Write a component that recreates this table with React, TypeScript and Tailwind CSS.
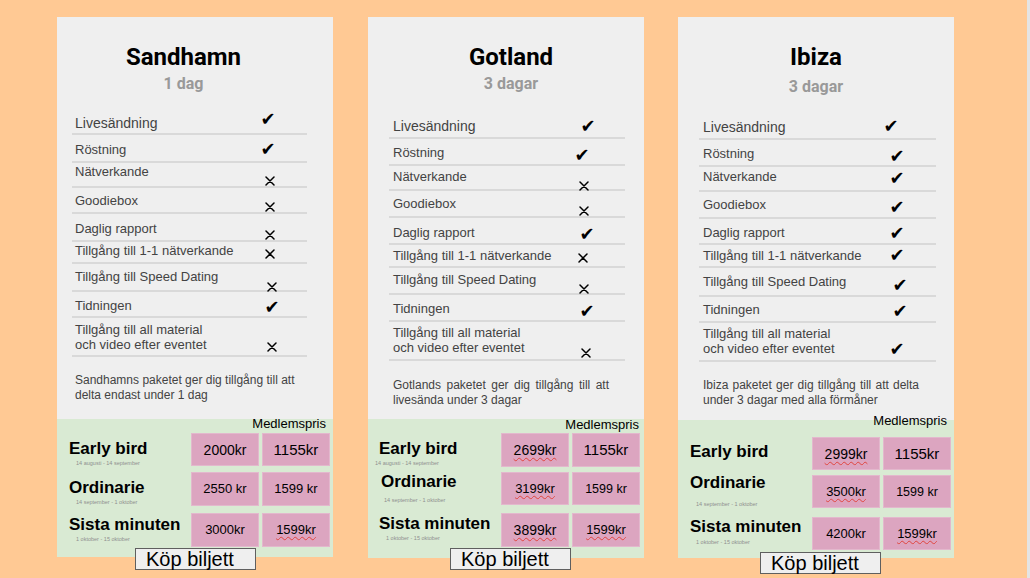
import React from "react";

type Feature = {
  t: string;
  ok: boolean;
  h: string;
  tp: string;
  ip: string;
  big?: boolean;
  two?: boolean;
};

type Cell = { v: string; s: string; wavy?: boolean };

type PriceRow = {
  label: string;
  date?: string;
  h: string;
  m: string;
  lp: string;
  dp: string;
  cells: Cell[];
};

type Plan = {
  title: string;
  sub: string;
  wrap: string;
  head: string;
  subM: string;
  gray: string;
  green: string;
  list: string;
  textW: string;
  rows: Feature[];
  desc: string;
  descCls: string;
  member: string;
  labelW: string;
  prices: PriceRow[];
  btn: string;
};

const allMaterial = "Tillgång till all material\noch video efter eventet";

// icon offsets: pt = icon centre - row top - 5 (icons sit in a 10px box)
const plans: Plan[] = [
  {
    title: "Sandhamn",
    sub: "1 dag",
    wrap: "ml-[57px]",
    head: "pr-[23px]",
    subM: "mt-[3px]",
    gray: "h-[402px]",
    green: "h-[138px]",
    list: "mt-[16px] ml-[15px] w-[235px]",
    textW: "w-[188px] pl-[3px]",
    rows: [
      { t: "Livesändning", ok: true, h: "h-[25px]", tp: "pt-[5px]", ip: "pt-[4px] ml-0", big: true },
      { t: "Röstning", ok: true, h: "h-[28px]", tp: "pt-[7px]", ip: "pt-[9px] ml-0" },
      { t: "Nätverkande", ok: false, h: "h-[25px]", tp: "pt-[1px]", ip: "pt-[13px] ml-[2px]" },
      { t: "Goodiebox", ok: false, h: "h-[26px]", tp: "pt-[5px]", ip: "pt-[14px] ml-[2px]" },
      { t: "Daglig rapport", ok: false, h: "h-[28px]", tp: "pt-[7px]", ip: "pt-[16px] ml-[2px]" },
      { t: "Tillgång till 1-1 nätverkande", ok: false, h: "h-[22px]", tp: "pt-[1px]", ip: "pt-[7px] ml-[2px]" },
      { t: "Tillgång till Speed Dating", ok: false, h: "h-[28px]", tp: "pt-[5px]", ip: "pt-[18px] ml-[4px]" },
      { t: "Tidningen", ok: true, h: "h-[26px]", tp: "pt-[6px]", ip: "pt-[10px] ml-[4px]" },
      { t: allMaterial, ok: false, h: "h-[39px]", tp: "pt-[4px]", ip: "pt-[24px] ml-[4px]", two: true },
    ],
    desc: "Sandhamns paketet ger dig tillgång till att delta endast under 1 dag",
    descCls: "mt-[16px] ml-[18px] w-[224px] text-left",
    member: "pr-[7px] mt-0",
    labelW: "w-[134px] pl-[12px]",
    prices: [
      {
        label: "Early bird",
        date: "14 augusti - 14 september",
        h: "h-[33px]",
        m: "mt-[4px]",
        lp: "pt-[6px]",
        dp: "ml-[7px] mt-0",
        cells: [
          { v: "2000kr", s: "text-[14px]" },
          { v: "1155kr", s: "text-[15px]" },
        ],
      },
      {
        label: "Ordinarie",
        date: "14 september - 1 oktober",
        h: "h-[34px]",
        m: "mt-[5px]",
        lp: "pt-[6px]",
        dp: "ml-[7px] mt-0",
        cells: [
          { v: "2550 kr", s: "text-[13px]" },
          { v: "1599 kr", s: "text-[13px]" },
        ],
      },
      {
        label: "Sista minuten",
        date: "1 oktober - 15 oktober",
        h: "h-[34px]",
        m: "mt-[7px]",
        lp: "pt-[2px]",
        dp: "ml-[7px] mt-0",
        cells: [
          { v: "3000kr", s: "text-[13px]" },
          { v: "1599kr", s: "text-[13px]", wavy: true },
        ],
      },
    ],
    btn: "ml-[78px] -mt-[9px]",
  },
  {
    title: "Gotland",
    sub: "3 dagar",
    wrap: "ml-[35px]",
    head: "pl-[10px]",
    subM: "mt-[3px]",
    gray: "h-[402px]",
    green: "h-[139px]",
    list: "mt-[18px] ml-[21px] w-[236px]",
    textW: "w-[185px] pl-[4px]",
    rows: [
      { t: "Livesändning", ok: true, h: "h-[27px]", tp: "pt-[6px]", ip: "pt-[9px] ml-[6px]", big: true },
      { t: "Röstning", ok: true, h: "h-[27px]", tp: "pt-[6px]", ip: "pt-[11px] ml-0" },
      { t: "Nätverkande", ok: false, h: "h-[25px]", tp: "pt-[3px]", ip: "pt-[15px] ml-[2px]" },
      { t: "Goodiebox", ok: false, h: "h-[27px]", tp: "pt-[5px]", ip: "pt-[15px] ml-[2px]" },
      { t: "Daglig rapport", ok: true, h: "h-[27px]", tp: "pt-[7px]", ip: "pt-[11px] ml-[5px]" },
      { t: "Tillgång till 1-1 nätverkande", ok: false, h: "h-[23px]", tp: "pt-[3px]", ip: "pt-[8px] ml-[1px]" },
      { t: "Tillgång till Speed Dating", ok: false, h: "h-[27px]", tp: "pt-[4px]", ip: "pt-[16px] ml-[2px]" },
      { t: "Tidningen", ok: true, h: "h-[27px]", tp: "pt-[6px]", ip: "pt-[11px] ml-[5px]" },
      { t: allMaterial, ok: false, h: "h-[39px]", tp: "pt-[3px]", ip: "pt-[26px] ml-[4px]", two: true },
    ],
    desc: "Gotlands paketet ger dig tillgång till att livesända under 3 dagar",
    descCls: "mt-[17px] ml-[25px] w-[216px] text-justify",
    member: "pr-[5px] mt-[1px]",
    labelW: "w-[133px] pl-[11px]",
    prices: [
      {
        label: "Early bird",
        date: "14 augusti - 14 september",
        h: "h-[34px]",
        m: "mt-[3px]",
        lp: "pt-[6px]",
        dp: "-ml-[4px] mt-0",
        cells: [
          { v: "2699kr", s: "text-[14px]", wavy: true },
          { v: "1155kr", s: "text-[15px]" },
        ],
      },
      {
        label: "Ordinarie",
        date: "14 september - 1 oktober",
        h: "h-[33px]",
        m: "mt-[5px]",
        lp: "pt-0 pl-[2px]",
        dp: "ml-[5px] mt-[4px]",
        cells: [
          { v: "3199kr", s: "text-[13px]", wavy: true },
          { v: "1599 kr", s: "text-[12.5px]" },
        ],
      },
      {
        label: "Sista minuten",
        date: "1 oktober - 15 oktober",
        h: "h-[34px]",
        m: "mt-[8px]",
        lp: "pt-[1px]",
        dp: "ml-[7px] mt-0",
        cells: [
          { v: "3899kr", s: "text-[14px]", wavy: true },
          { v: "1599kr", s: "text-[13px]", wavy: true },
        ],
      },
    ],
    btn: "ml-[82px] -mt-[10px]",
  },
  {
    title: "Ibiza",
    sub: "3 dagar",
    wrap: "ml-[34px]",
    head: "pl-0",
    subM: "mt-[6px]",
    gray: "h-[403px]",
    green: "h-[138px]",
    list: "mt-[16px] ml-[21px] w-[237px]",
    textW: "w-[184px] pl-[4px]",
    rows: [
      { t: "Livesändning", ok: true, h: "h-[27px]", tp: "pt-[6px]", ip: "pt-[8px] ml-0", big: true },
      { t: "Röstning", ok: true, h: "h-[27px]", tp: "pt-[6px]", ip: "pt-[11px] ml-[6px]" },
      { t: "Nätverkande", ok: true, h: "h-[25px]", tp: "pt-[2px]", ip: "pt-[6px] ml-[6px]" },
      { t: "Goodiebox", ok: true, h: "h-[27px]", tp: "pt-[5px]", ip: "pt-[10px] ml-[6px]" },
      { t: "Daglig rapport", ok: true, h: "h-[26px]", tp: "pt-[6px]", ip: "pt-[9px] ml-[6px]" },
      { t: "Tillgång till 1-1 nätverkande", ok: true, h: "h-[23px]", tp: "pt-[3px]", ip: "pt-[5px] ml-[6px]" },
      { t: "Tillgång till Speed Dating", ok: true, h: "h-[29px]", tp: "pt-[6px]", ip: "pt-[12px] ml-[9px]" },
      { t: "Tidningen", ok: true, h: "h-[26px]", tp: "pt-[5px]", ip: "pt-[9px] ml-[9px]" },
      { t: allMaterial, ok: true, h: "h-[39px]", tp: "pt-[3px]", ip: "pt-[21px] ml-[6px]", two: true },
    ],
    desc: "Ibiza paketet ger dig tillgång till att delta under 3 dagar med alla förmåner",
    descCls: "mt-[16px] ml-[25px] w-[216px] text-justify",
    member: "pr-[7px] -mt-[4px]",
    labelW: "w-[134px] pl-[12px]",
    prices: [
      {
        label: "Early bird",
        h: "h-[33px]",
        m: "mt-[11px]",
        lp: "pt-[5px]",
        dp: "",
        cells: [
          { v: "2999kr", s: "text-[14px]", wavy: true },
          { v: "1155kr", s: "text-[15px]" },
        ],
      },
      {
        label: "Ordinarie",
        date: "14 september - 1 oktober",
        h: "h-[33px]",
        m: "mt-[5px]",
        lp: "-mt-[2px]",
        dp: "ml-[6px] mt-[7px]",
        cells: [
          { v: "3500kr", s: "text-[13px]", wavy: true },
          { v: "1599 kr", s: "text-[12.5px]" },
        ],
      },
      {
        label: "Sista minuten",
        date: "1 oktober - 15 oktober",
        h: "h-[33px]",
        m: "mt-[9px]",
        lp: "pt-0",
        dp: "ml-[6px] mt-[1px]",
        cells: [
          { v: "4200kr", s: "text-[13px]" },
          { v: "1599kr", s: "text-[13px]", wavy: true },
        ],
      },
    ],
    btn: "ml-[82px] -mt-[6px]",
  },
];

function Mark({ ok }: { ok: boolean }) {
  if (ok) {
    return (
      <span className="block font-['DejaVu_Sans',sans-serif] text-[18px] leading-[10px] text-black">
        ✔
      </span>
    );
  }
  return (
    <svg viewBox="0 0 10 10" className="mx-auto block h-[10px] w-[10px]" aria-label="nej">
      <path d="M1 1 L9 9 M9 1 L1 9" stroke="black" strokeWidth="1.5" strokeLinecap="round" />
    </svg>
  );
}

function PlanCard({ plan }: { plan: Plan }) {
  return (
    <div className={`flex shrink-0 flex-col ${plan.wrap}`}>
      <div className={`w-[276px] bg-[#efefef] pt-[26px] ${plan.gray}`}>
        <div className={`text-center font-['Roboto',sans-serif] font-bold ${plan.head}`}>
          <h2 className="text-[24px] leading-[28px] text-black">{plan.title}</h2>
          <p className={`text-[16px] leading-5 text-[#999999] ${plan.subM}`}>
            {plan.sub}
          </p>
        </div>

        <ul className={`${plan.list} font-['Liberation_Sans',Arial,sans-serif] text-[#434343]`}>
          {plan.rows.map((row) => (
            <li
              key={row.t}
              className={`flex items-start border-b-2 border-[#d9d9d9] ${row.h}`}
            >
              <div
                className={`shrink-0 ${plan.textW} ${row.tp} ${
                  row.big ? "text-[14px]" : "text-[13px]"
                } ${row.two ? "leading-[15px] whitespace-pre-line" : "leading-4"}`}
              >
                {row.t}
              </div>
              <div className={`w-4 shrink-0 text-center ${row.ip}`}>
                <Mark ok={row.ok} />
              </div>
            </li>
          ))}
        </ul>

        <p
          className={`${plan.descCls} font-['Liberation_Sans',Arial,sans-serif] text-[12px] leading-[15px] text-[#434343]`}
        >
          {plan.desc}
        </p>
      </div>

      <div
        className={`w-[276px] bg-[#d9ead3] font-['Liberation_Sans',Arial,sans-serif] text-black ${plan.green}`}
      >
        <p className={`text-right text-[13px] leading-[10px] ${plan.member}`}>Medlemspris</p>
        {plan.prices.map((pr) => (
          <div key={pr.label} className={`flex items-start ${pr.m}`}>
            <div className={`shrink-0 ${plan.labelW}`}>
              <div className={`text-[17px] font-bold leading-5 ${pr.lp}`}>{pr.label}</div>
              {pr.date && (
                <div className={`text-[5.5px] leading-[8px] text-[#8f8f8f] ${pr.dp}`}>
                  {pr.date}
                </div>
              )}
            </div>
            <div className="flex gap-[3px]">
              {pr.cells.map((c) => (
                <div
                  key={c.v}
                  className={`flex w-[68px] items-center justify-center border border-[#e3b8cd] bg-[#dca5c0] ${pr.h}`}
                >
                  <span
                    className={`${c.s} leading-4 ${
                      c.wavy
                        ? "underline decoration-wavy decoration-[#e0443e] decoration-1 underline-offset-2"
                        : ""
                    }`}
                  >
                    {c.v}
                  </span>
                </div>
              ))}
            </div>
          </div>
        ))}
      </div>

      <button
        className={`h-[22px] w-[121px] self-start border border-[#5f5f5f] bg-[#efefef] pl-[10px] text-left font-['Liberation_Sans',Arial,sans-serif] text-[20px] leading-[20px] text-black ${plan.btn}`}
      >
        Köp biljett
      </button>
    </div>
  );
}

export default function App() {
  return (
    <div className="flex h-[578px] w-[1030px] overflow-hidden">
      <main className="flex flex-1 items-start bg-[#ffc994] pt-[17px]">
        {plans.map((plan) => (
          <PlanCard key={plan.title} plan={plan} />
        ))}
      </main>
      <div className="w-[3px] bg-[#e4e4e4]" />
    </div>
  );
}
